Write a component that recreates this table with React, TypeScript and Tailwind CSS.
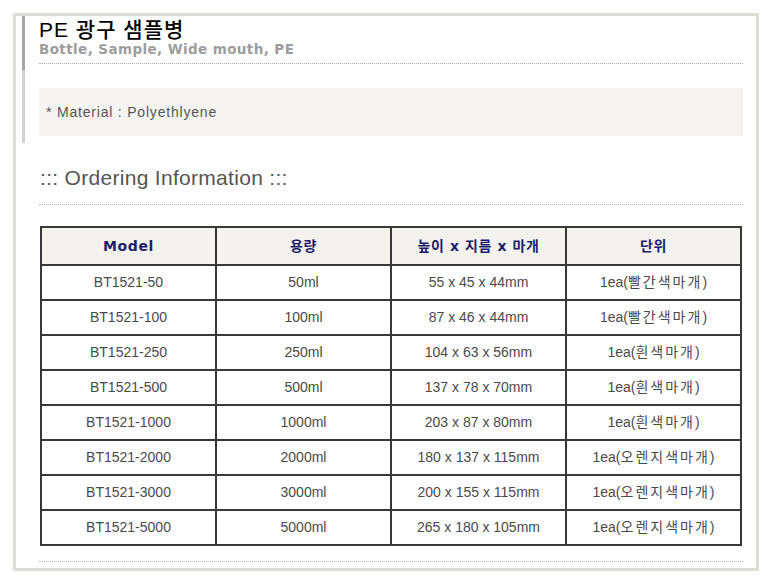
import React from "react";

const rows = [
  ["BT1521-50", "50ml", "55 x 45 x 44mm", "빨간색마개"],
  ["BT1521-100", "100ml", "87 x 46 x 44mm", "빨간색마개"],
  ["BT1521-250", "250ml", "104 x 63 x 56mm", "흰색마개"],
  ["BT1521-500", "500ml", "137 x 78 x 70mm", "흰색마개"],
  ["BT1521-1000", "1000ml", "203 x 87 x 80mm", "흰색마개"],
  ["BT1521-2000", "2000ml", "180 x 137 x 115mm", "오렌지색마개"],
  ["BT1521-3000", "3000ml", "200 x 155 x 115mm", "오렌지색마개"],
  ["BT1521-5000", "5000ml", "265 x 180 x 105mm", "오렌지색마개"],
];

const headers = ["Model", "용량", "높이 x 지름 x 마개", "단위"];

const cell = "h-[35px] border-2 border-[#383838] text-center text-[14px] text-[#4a4a4a] p-0";

export default function App() {
  return (
    <div className="w-[771px] h-[583px] bg-white pt-[13px] pl-[13px] font-['Liberation_Sans','Noto_Sans_CJK_KR',sans-serif]">
      <div className="w-[746px] h-[558px] border-[3px] border-[#dddcd7] flex">
        <div className="ml-[6px] w-[3px] h-[127px] flex flex-col shrink-0">
          <div className="h-[54px] bg-[#a6a6a6]" />
          <div className="flex-1 bg-[#d2d2d2]" />
        </div>
        <div className="ml-[14px] w-[704px] flex flex-col">
          <div className="pt-[3px] pb-[6px] border-b border-dotted border-[#b0b0b0]">
            <div className="text-[21px] leading-[22px] font-medium tracking-[1px] text-black">PE 광구 샘플병</div>
            <div className="text-[13.5px] leading-[16px] font-bold text-[#9d9d9d] font-['DejaVu_Sans','Noto_Sans_CJK_KR',sans-serif] tracking-[0.4px]">
              Bottle, Sample, Wide mouth, PE
            </div>
          </div>
          <div className="mt-[24px] h-[48px] bg-[#f6f4f0] flex items-center pl-[7px] text-[14px] tracking-[0.8px] text-[#555]">
            * Material : Polyethlyene
          </div>
          <div className="mt-[29px] pb-[13px] border-b border-dotted border-[#b0b0b0] text-[21px] leading-[26px] tracking-[0.3px] text-[#555] pl-[1px]">
            ::: Ordering Information :::
          </div>
          <table className="mt-[21px] ml-[1px] w-[702px] border-collapse table-fixed">
            <thead>
              <tr className="bg-[#f4f2ee]">
                {headers.map((h) => (
                  <th
                    key={h}
                    className="h-[38px] border-2 border-[#383838] text-[14px] font-bold tracking-[0.6px] text-[#1d1d6b] font-['DejaVu_Sans','Noto_Sans_CJK_KR',sans-serif]"
                  >
                    {h}
                  </th>
                ))}
              </tr>
            </thead>
            <tbody>
              {rows.map((r) => (
                <tr key={r[0]}>
                  <td className={cell}>{r[0]}</td>
                  <td className={cell}>{r[1]}</td>
                  <td className={cell}>{r[2]}</td>
                  <td className={cell}>
                    1ea(<span className="tracking-[2px]">{r[3]}</span>)
                  </td>
                </tr>
              ))}
            </tbody>
          </table>
          <div className="mt-[15px] border-b border-dotted border-[#b0b0b0]" />
        </div>
      </div>
    </div>
  );
}
